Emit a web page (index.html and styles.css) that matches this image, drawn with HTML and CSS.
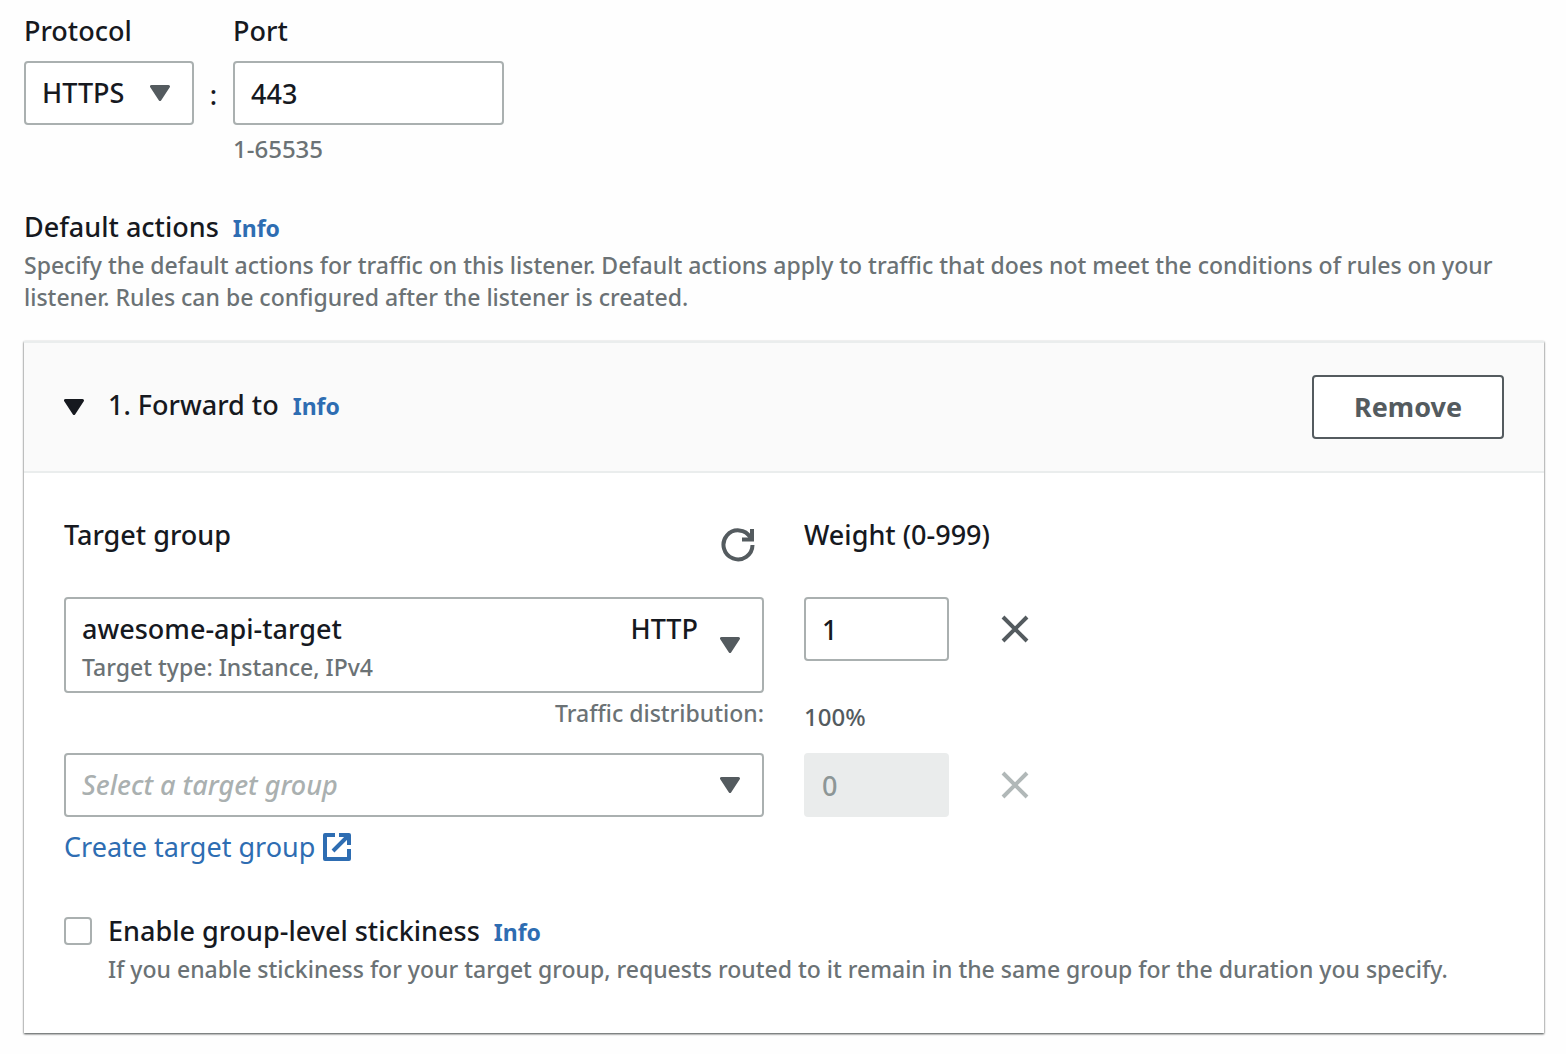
FILE: index.html
```html
<!DOCTYPE html>
<html lang="en">
<head>
<meta charset="utf-8">
<meta name="viewport" content="width=device-width, initial-scale=1">
<title>Listener settings</title>
<link rel="stylesheet" href="styles.css">
</head>
<body>
<main class="listener">
  <div class="endpoint">
    <div class="field protocol">
      <label class="label" for="protocol">Protocol</label>
      <div class="select">
        <select id="protocol" class="control"><option>HTTPS</option></select>
        <svg class="caret" viewBox="0 0 20 16" aria-hidden="true"><path d="M1.500 1.500h17l-8.500 13z"/></svg>
      </div>
    </div>
    <span class="colon">:</span>
    <div class="field port">
      <label class="label" for="port">Port</label>
      <input id="port" class="control" type="text" value="443" aria-describedby="port-hint">
      <p id="port-hint" class="hint number">1-65535</p>
    </div>
  </div>

  <section class="actions">
    <div class="heading">
      <h2 class="label">Default actions</h2>
      <a class="info" href="#info">Info</a>
    </div>
    <p class="hint">Specify the default actions for traffic on this listener. Default actions apply to traffic that does not meet the conditions of rules on your listener. Rules can be configured after the listener is created.</p>
  </section>

  <section class="card">
    <header class="card-header">
      <div class="heading">
        <button class="toggle" type="button" aria-expanded="true">
          <svg class="caret" viewBox="0 0 20 16" aria-hidden="true"><path d="M1.500 1.500h17l-8.500 13z"/></svg>
          <span>1. Forward to</span>
        </button>
        <a class="info" href="#forward-info">Info</a>
      </div>
      <button class="remove" type="button">Remove</button>
    </header>

    <div class="card-body">
      <div class="targets">
        <div class="target-title">
          <label class="label" for="target-1">Target group</label>
          <button class="icon-button refresh" type="button" aria-label="Refresh target groups">
            <svg viewBox="0 0 34 34" aria-hidden="true"><path d="M29.500 9.500A14.500 14.500 0 1 0 31.500 17"/><path d="M31 1v10.500H21"/></svg>
          </button>
        </div>
        <label class="label weight-title" for="weight-1">Weight (0-999)</label>

        <div class="select two-line">
          <select id="target-1" class="control"><option>awesome-api-target</option></select>
          <span class="option-detail">Target type: Instance, IPv4</span>
          <span class="option-tag">HTTP</span>
          <svg class="caret" viewBox="0 0 20 16" aria-hidden="true"><path d="M1.500 1.500h17l-8.500 13z"/></svg>
        </div>
        <input id="weight-1" class="control" type="text" value="1">
        <button class="icon-button" type="button" aria-label="Remove target group">
          <svg viewBox="0 0 28 28" aria-hidden="true"><path d="M2 2l24 24M26 2L2 26"/></svg>
        </button>

        <p class="hint distribution">Traffic distribution:</p>
        <p class="hint number percent">100%</p>

        <div class="select">
          <select class="control placeholder" aria-label="Second target group"><option>Select a target group</option></select>
          <svg class="caret" viewBox="0 0 20 16" aria-hidden="true"><path d="M1.500 1.500h17l-8.500 13z"/></svg>
        </div>
        <input class="control" type="text" value="0" aria-label="Second weight" disabled>
        <button class="icon-button" type="button" aria-label="Remove second target group" disabled>
          <svg viewBox="0 0 28 28" aria-hidden="true"><path d="M2 2l24 24M26 2L2 26"/></svg>
        </button>
      </div>

      <a class="create" href="#create">Create target group
        <svg viewBox="0 0 28 28" aria-hidden="true"><path d="M12 2H2v24h24V16M16 2h10v10M26 2L10 18"/></svg>
      </a>

      <div class="stickiness">
        <input id="sticky" class="checkbox" type="checkbox" aria-describedby="sticky-hint">
        <div>
          <div class="heading">
            <label class="label" for="sticky">Enable group-level stickiness</label>
            <a class="info" href="#sticky-info">Info</a>
          </div>
          <p id="sticky-hint" class="hint">If you enable stickiness for your target group, requests routed to it remain in the same group for the duration you specify.</p>
        </div>
      </div>
    </div>
  </section>
</main>
</body>
</html>
```
FILE: styles.css
```css
:root {
  --text: #16191f;
  --muted: #6b7275;
  --border: #aab0b0;
  --icon: #545b5f;
  --link: #2e6db2;
}

* {
  box-sizing: border-box;
}

body {
  margin: 0;
  background: #fefefe;
  color: var(--text);
  font: 500 27px/44px "Noto Sans", "Open Sans", sans-serif;
}

h2,
p {
  margin: 0;
}

button,
input,
select {
  font: inherit;
  color: inherit;
}

a {
  color: var(--link);
  text-decoration: none;
}

.listener {
  padding: 9px 22px 20px 24px;
}

.label {
  display: block;
  font-size: 27px;
  font-weight: 500;
}

.hint {
  color: var(--muted);
  font-size: 23px;
  line-height: 32px;
}

.hint.number {
  font-size: 24px;
}

.info {
  font-size: 23px;
  font-weight: 700;
  line-height: 32px;
}

.heading {
  display: flex;
  align-items: baseline;
  gap: 14px;
}

.control {
  display: block;
  width: 100%;
  height: 64px;
  margin: 0;
  padding: 0 16px;
  border: 2px solid var(--border);
  border-radius: 4px;
  background: #fff;
}

.control:disabled {
  border-color: #eaecec;
  background: #eaecec;
  color: #8d9696;
}

.select {
  display: grid;
  align-items: center;
}

.select > * {
  grid-area: 1 / 1;
}

.select select {
  appearance: none;
}

.caret {
  width: 20px;
  height: 16px;
  fill: currentColor;
  stroke: currentColor;
  stroke-width: 3;
  stroke-linejoin: round;
}

.select .caret {
  justify-self: end;
  margin-right: 24px;
  color: var(--icon);
  pointer-events: none;
}

.endpoint {
  display: flex;
}

.endpoint .control,
.endpoint .hint {
  margin-top: 8px;
}

.protocol {
  width: 170px;
}

.protocol .caret {
  margin-top: 8px;
}

.port {
  width: 271px;
}

.colon {
  width: 39px;
  padding-top: 64px;
  text-align: center;
}

.actions {
  margin-top: 40px;
}

.card {
  margin-top: 28px;
  border-top: 2px solid #eaeded;
  background: #fff;
  box-shadow: 0 1px 2px rgba(0, 10, 10, 0.55), 0 1px 2px rgba(0, 10, 10, 0.3);
}

.card-header {
  display: flex;
  align-items: center;
  justify-content: space-between;
  padding: 32px 40px;
  border-bottom: 2px solid #eaeded;
  background: #fafafa;
}

.card-header .heading {
  padding-bottom: 4px;
}

.toggle {
  display: flex;
  align-items: baseline;
  gap: 24px;
  padding: 0;
  border: 0;
  background: none;
}

.toggle .caret {
  margin-bottom: 2px;
}

.remove {
  width: 192px;
  height: 64px;
  border: 2px solid var(--icon);
  border-radius: 4px;
  background: #fff;
  color: var(--icon);
  font-weight: 700;
}

.card-body {
  padding: 40px 40px 48px;
}

.targets {
  display: grid;
  grid-template-columns: minmax(0, 700px) 145px 52px;
  column-gap: 40px;
  align-items: start;
}

.target-title {
  display: flex;
  justify-content: space-between;
  height: 84px;
}

.weight-title {
  grid-column: 2 / -1;
}

.icon-button {
  display: flex;
  align-items: center;
  justify-content: center;
  width: 52px;
  height: 64px;
  padding: 0;
  border: 0;
  background: none;
  color: var(--icon);
}

.icon-button:disabled {
  color: #b1b8b8;
}

.icon-button svg {
  width: 28px;
  height: 28px;
  fill: none;
  stroke: currentColor;
  stroke-width: 4;
}

.icon-button.refresh svg {
  width: 34px;
  height: 34px;
}

.two-line .control {
  height: 96px;
  padding-bottom: 32px;
}

.option-detail {
  align-self: end;
  padding: 0 18px 10px;
  color: var(--muted);
  font-size: 23px;
  line-height: 32px;
  pointer-events: none;
}

.option-tag {
  align-self: start;
  justify-self: end;
  padding: 10px 66px 0 0;
  pointer-events: none;
}

.distribution {
  padding: 4px 0 24px;
  text-align: right;
}

.percent {
  grid-column: 2 / -1;
  padding-top: 8px;
  color: var(--icon);
}

.placeholder {
  color: #aab0b0;
  font-style: italic;
}

.create {
  display: inline-flex;
  align-items: center;
  gap: 8px;
  margin-top: 8px;
  font-weight: 400;
}

.create svg {
  width: 28px;
  height: 28px;
  fill: none;
  stroke: currentColor;
  stroke-width: 4;
  stroke-linejoin: round;
}

.stickiness {
  display: flex;
  gap: 16px;
  margin-top: 40px;
}

.checkbox {
  flex: none;
  width: 28px;
  height: 28px;
  margin: 8px 0 0;
  appearance: none;
  border: 2px solid var(--border);
  border-radius: 4px;
  background: #fff;
}

.checkbox:checked {
  background: var(--link);
}
```
